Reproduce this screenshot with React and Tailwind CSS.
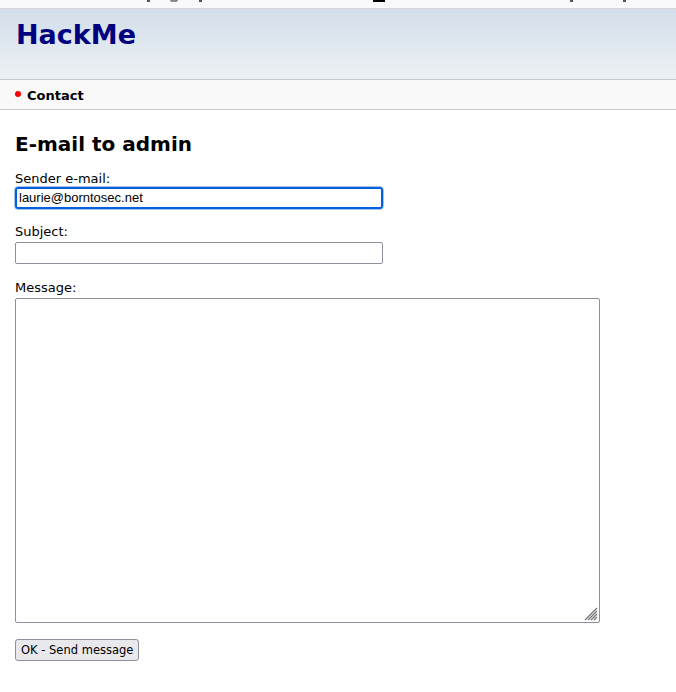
import React from "react";

export default function App() {
  return (
    <div className="w-[676px] h-[692px] bg-white overflow-hidden" style={{ fontFamily: '"DejaVu Sans", Verdana, sans-serif' }}>
      <div className="h-[9px] bg-[#f9f9fb] border-b border-[#d2d2d6] flex items-start">
        <span className="ml-[147px] w-[3px] h-[2px] bg-[#555]"></span>
        <span className="ml-[20px] w-[8px] h-[2px] bg-[#888] rounded-b"></span>
        <span className="ml-[21px] w-[3px] h-[2px] bg-[#555]"></span>
        <span className="ml-[171px] w-[12px] h-[2px] bg-black"></span>
        <span className="ml-[185px] w-[3px] h-[2px] bg-[#555]"></span>
        <span className="ml-[50px] w-[3px] h-[2px] bg-[#555]"></span>
      </div>
      <header className="h-[71px] bg-gradient-to-b from-[#d2deea] to-[#edf1f4] border-b border-[#c2cad6] px-[16px] pt-[9px]">
        <h1 className="text-[27px] leading-[34px] font-bold text-[#000080]">HackMe</h1>
      </header>
      <nav className="h-[30px] bg-[#f9f9f9] border-b border-[#c8cdd4] flex items-center px-[15px]">
        <span className="w-[6px] h-[6px] rounded-full bg-[#ff0000] mr-[6px] -mt-[1px]"></span>
        <span className="text-[13px] font-bold text-black mt-[2px]">Contact</span>
      </nav>
      <main className="px-[15px] flex flex-col items-start">
        <h2 className="text-[20px] font-bold text-black mt-[22px] leading-[25px]">E-mail to admin</h2>
        <label className="text-[13px] text-black mt-[15px] leading-[14px]">Sender e-mail:</label>
        <div className="-ml-[1px] w-[370px] h-[24px] rounded-[4px] border border-[#a9c4ea]">
          <div className="w-full h-full rounded-[3px] border-[2px] border-[#0060df] flex items-center px-[2px] text-[13px] text-black" style={{ fontFamily: '"Liberation Sans", Arial, sans-serif' }}>
            laurie@borntosec.net
          </div>
        </div>
        <label className="text-[13px] text-black mt-[15px] leading-[14px]">Subject:</label>
        <div className="mt-[3px] w-[368px] h-[22px] rounded-[2px] border border-[#8f8f9d] bg-white"></div>
        <label className="text-[13px] text-black mt-[17px] leading-[14px]">Message:</label>
        <div className="mt-[3px] w-[585px] h-[325px] rounded-[2px] border border-[#8f8f9d] bg-white flex items-end justify-end p-[1px]">
          <svg width="15" height="15" viewBox="0 0 15 15">
            <path d="M14 2 L2 14 M14 5 L5 14 M14 8 L8 14 M14 11 L11 14" stroke="#6f6f6f" strokeWidth="1.2" />
          </svg>
        </div>
        <button className="mt-[16px] h-[22px] px-[5px] rounded-[3px] border border-[#8f8f9d] bg-[#e9e9ed] text-[11.5px] text-black leading-[14px]" style={{ fontFamily: '"DejaVu Sans", Verdana, sans-serif' }}>
          OK - Send message
        </button>
      </main>
    </div>
  );
}
